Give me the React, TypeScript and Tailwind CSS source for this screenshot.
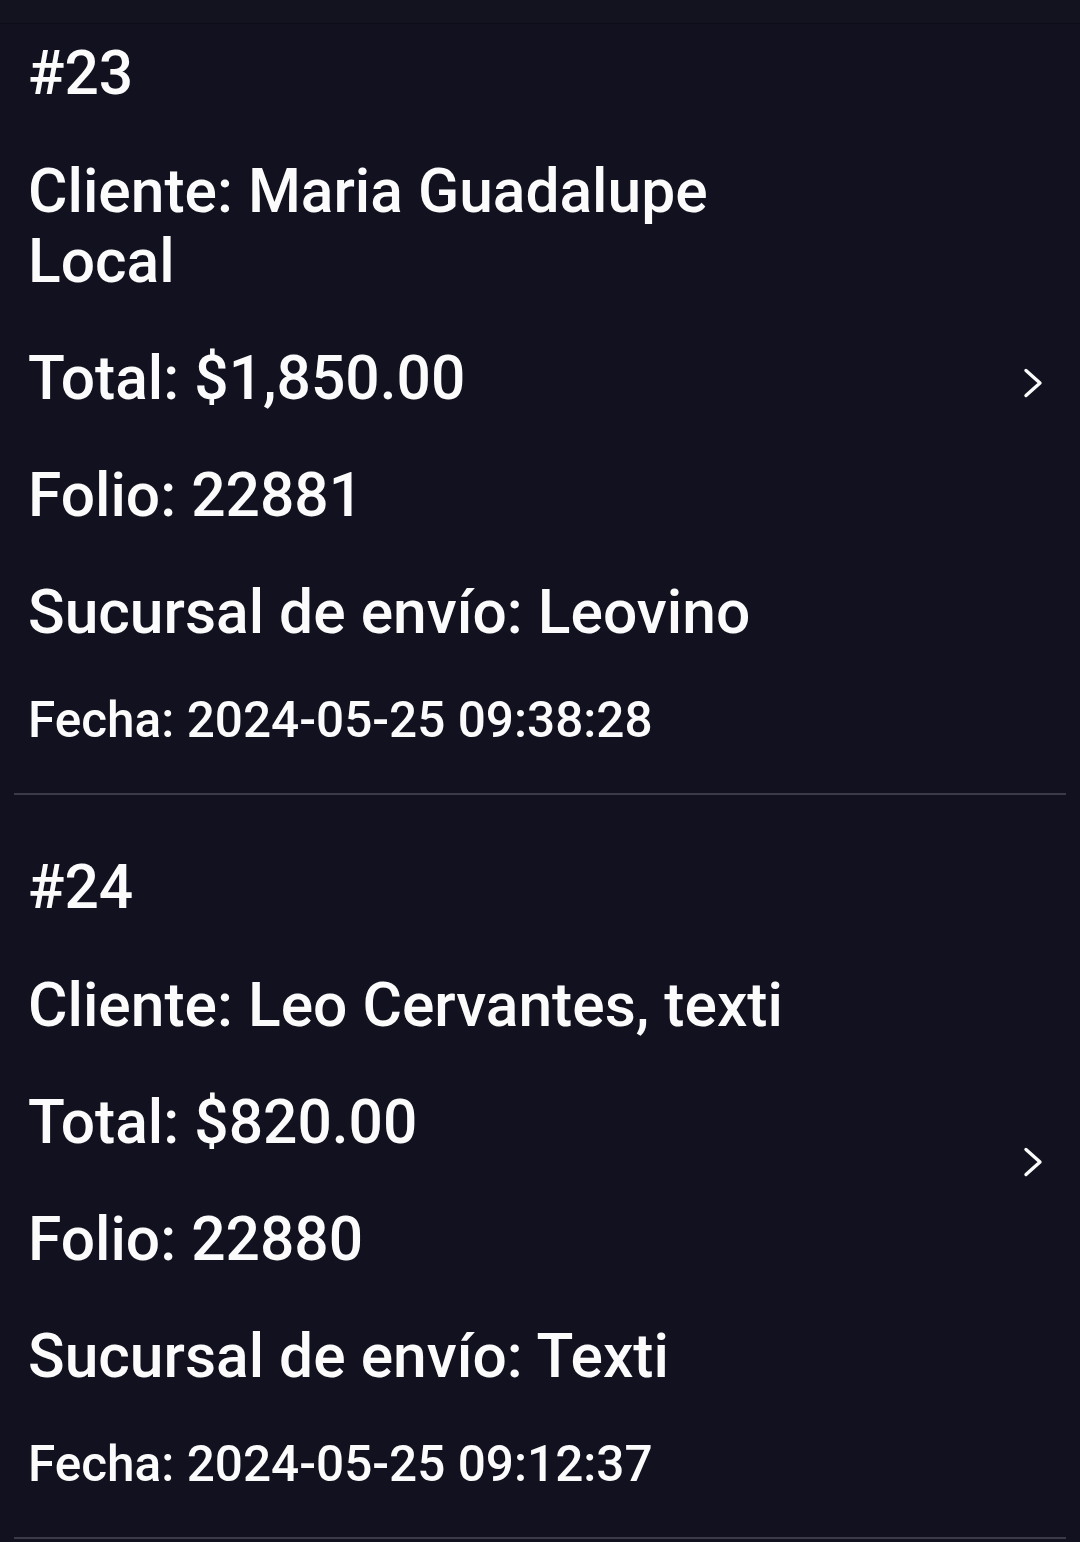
import React from 'react';

type Pedido = {
  numero: number;
  cliente: string[];
  total: string;
  folio: string;
  sucursal: string;
  fecha: string;
};

const pedidos: Pedido[] = [
  {
    numero: 23,
    cliente: ['Cliente: Maria Guadalupe', 'Local'],
    total: '$1,850.00',
    folio: '22881',
    sucursal: 'Leovino',
    fecha: '2024-05-25 09:38:28',
  },
  {
    numero: 24,
    cliente: ['Cliente: Leo Cervantes, texti'],
    total: '$820.00',
    folio: '22880',
    sucursal: 'Texti',
    fecha: '2024-05-25 09:12:37',
  },
];

function Chevron() {
  return (
    <svg width="20" height="30" viewBox="0 0 20 30" className="mb-[23px] shrink-0" fill="none">
      <polyline
        points="3,2.5 17,15 3,27.5"
        stroke="#fafafa"
        strokeWidth="3.4"
        strokeLinecap="round"
        strokeLinejoin="round"
      />
    </svg>
  );
}

function PedidoItem({ pedido }: { pedido: Pedido }) {
  return (
    <div>
      <div className="flex items-center pl-[28px] pr-[37px] pt-[58px] pb-[43px]">
        <div className="flex-1 flex flex-col text-[60.5px] leading-[70px]">
          <div>#{pedido.numero}</div>
          <div className="mt-[48px]">
            {pedido.cliente.map((line) => (
              <div key={line}>{line}</div>
            ))}
          </div>
          <div className="mt-[47px]">Total: {pedido.total}</div>
          <div className="mt-[47px]">Folio: {pedido.folio}</div>
          <div className="mt-[47px]">Sucursal de envío: {pedido.sucursal}</div>
          <div className="mt-[43px] text-[49.5px] leading-[59px]">Fecha: {pedido.fecha}</div>
        </div>
        <Chevron />
      </div>
      <div className="mx-[14px] h-[2px] bg-[#3a3a48]" />
    </div>
  );
}

export default function App() {
  return (
    <div
      className="w-[1080px] h-[1542px] overflow-hidden bg-[#11111f] text-[#fbfbfb] font-medium"
      style={{ fontFamily: 'Roboto, "Noto Sans", sans-serif' }}
    >
      <div className="relative z-10 h-[24px] bg-[#131320] border-b border-[#0c0c16]" />
      <div className="-mt-[43px]">
        {pedidos.map((p) => (
          <PedidoItem key={p.numero} pedido={p} />
        ))}
      </div>
    </div>
  );
}
